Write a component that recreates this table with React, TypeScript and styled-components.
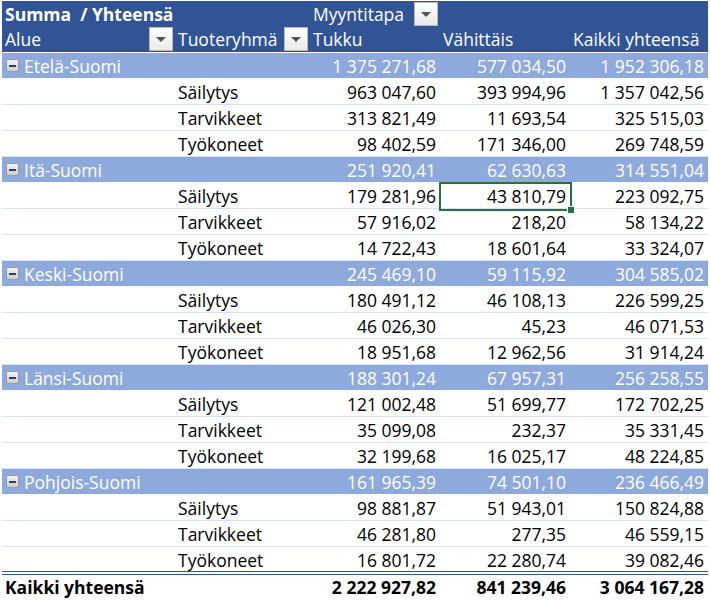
import React from 'react';
import styled, { createGlobalStyle, css } from 'styled-components';

const GlobalStyle = createGlobalStyle`
    html, body {
        margin: 0;
        padding: 0;
        background: #ffffff;
    }
    body {
        font-family: "Open Sans", "Liberation Sans", sans-serif;
        font-size: 17.5px;
        color: #000000;
    }
`;

const Sheet = styled.div`
    padding: 1px 0 0 2px;
    width: 706px;
`;

const Row = styled.div<{ kind: 'head' | 'head2' | 'group' | 'data' | 'last' | 'total' }>`
    display: grid;
    grid-template-columns: 173px 135px 130px 130px 138px;
    height: 26px;
    box-sizing: border-box;
    line-height: 27px;
    ${p => p.kind === 'head' && css`
        height: 25px;
        background: #305496;
        color: #ffffff;
    `}
    ${p => p.kind === 'head2' && css`
        height: 27px;
        background: #305496;
        color: #ffffff;
        border-bottom: 1px solid #ffffff;
    `}
    ${p => p.kind === 'group' && css`
        background: #8ea9db;
        color: #ffffff;
        border-bottom: 1px solid #ffffff;
    `}
    ${p => p.kind === 'data' && css`
        border-bottom: 1px solid #d9e1f2;
    `}
    ${p => p.kind === 'last' && css`
        height: 24px;
    `}
    ${p => p.kind === 'total' && css`
        border-top: 4px double #305496;
        font-weight: 700;
        height: 29px;
        line-height: 25px;
    `}
`;

const Cell = styled.div<{ right?: boolean; selected?: boolean; bold?: boolean }>`
    display: flex;
    align-items: flex-start;
    justify-content: ${p => (p.right ? 'flex-end' : 'flex-start')};
    padding: 0 ${p => (p.right ? '4px' : '2px')} 0 ${p => (p.right ? '0' : '3px')};
    white-space: pre;
    overflow: visible;
    position: relative;
    font-weight: ${p => (p.bold ? 700 : 'inherit')};
    ${p => p.selected && css`
        &::before {
            content: '';
            position: absolute;
            left: -1px;
            top: -1px;
            right: -2px;
            bottom: -1px;
            border: 2px solid #217346;
        }
        &::after {
            content: '';
            position: absolute;
            right: -5px;
            bottom: -4px;
            width: 6px;
            height: 6px;
            background: #217346;
            border: 1px solid #ffffff;
        }
    `}
`;

const Label = styled.span`
    flex: 1;
`;

const Dropdown = styled.span`
    width: 24px;
    height: 24px;
    box-sizing: border-box;
    margin-top: 1px;
    border: 1px solid #b8b8b8;
    background: linear-gradient(#ffffff, #e9e9e9);
    display: flex;
    align-items: center;
    justify-content: center;
    &::after {
        content: '';
        width: 0;
        height: 0;
        border-left: 5px solid transparent;
        border-right: 5px solid transparent;
        border-top: 5px solid #555555;
    }
`;

const Collapse = styled.span`
    width: 13px;
    height: 13px;
    box-sizing: border-box;
    margin: 6px 5px 0 1px;
    border: 1px solid #9a9a9a;
    border-radius: 2px;
    background: linear-gradient(#f2f2f2, #cfcfcf);
    display: flex;
    align-items: center;
    justify-content: center;
    &::after {
        content: '';
        width: 7px;
        height: 2px;
        background: #2b3a67;
    }
`;

type Group = {
    name: string;
    total: string[];
    rows: string[][];
};

const groups: Group[] = [
    {
        name: 'Etelä-Suomi',
        total: ['1 375 271,68', '577 034,50', '1 952 306,18'],
        rows: [
            ['Säilytys', '963 047,60', '393 994,96', '1 357 042,56'],
            ['Tarvikkeet', '313 821,49', '11 693,54', '325 515,03'],
            ['Työkoneet', '98 402,59', '171 346,00', '269 748,59'],
        ],
    },
    {
        name: 'Itä-Suomi',
        total: ['251 920,41', '62 630,63', '314 551,04'],
        rows: [
            ['Säilytys', '179 281,96', '43 810,79', '223 092,75'],
            ['Tarvikkeet', '57 916,02', '218,20', '58 134,22'],
            ['Työkoneet', '14 722,43', '18 601,64', '33 324,07'],
        ],
    },
    {
        name: 'Keski-Suomi',
        total: ['245 469,10', '59 115,92', '304 585,02'],
        rows: [
            ['Säilytys', '180 491,12', '46 108,13', '226 599,25'],
            ['Tarvikkeet', '46 026,30', '45,23', '46 071,53'],
            ['Työkoneet', '18 951,68', '12 962,56', '31 914,24'],
        ],
    },
    {
        name: 'Länsi-Suomi',
        total: ['188 301,24', '67 957,31', '256 258,55'],
        rows: [
            ['Säilytys', '121 002,48', '51 699,77', '172 702,25'],
            ['Tarvikkeet', '35 099,08', '232,37', '35 331,45'],
            ['Työkoneet', '32 199,68', '16 025,17', '48 224,85'],
        ],
    },
    {
        name: 'Pohjois-Suomi',
        total: ['161 965,39', '74 501,10', '236 466,49'],
        rows: [
            ['Säilytys', '98 881,87', '51 943,01', '150 824,88'],
            ['Tarvikkeet', '46 281,80', '277,35', '46 559,15'],
            ['Työkoneet', '16 801,72', '22 280,74', '39 082,46'],
        ],
    },
];

const grandTotal = ['2 222 927,82', '841 239,46', '3 064 167,28'];

function App(): JSX.Element {
    return (
        <Sheet>
            <GlobalStyle />
            <Row kind="head">
                <Cell bold>{'Summa  / Yhteensä'}</Cell>
                <Cell></Cell>
                <Cell>
                    <Label>Myyntitapa</Label>
                    <Dropdown />
                </Cell>
                <Cell></Cell>
                <Cell></Cell>
            </Row>
            <Row kind="head2">
                <Cell>
                    <Label>Alue</Label>
                    <Dropdown />
                </Cell>
                <Cell>
                    <Label>Tuoteryhmä</Label>
                    <Dropdown />
                </Cell>
                <Cell>Tukku</Cell>
                <Cell>Vähittäis</Cell>
                <Cell>Kaikki yhteensä</Cell>
            </Row>
            {groups.map((g, gi) => (
                <React.Fragment key={g.name}>
                    <Row kind="group">
                        <Cell>
                            <Collapse />
                            {g.name}
                        </Cell>
                        <Cell></Cell>
                        {g.total.map((v, i) => (
                            <Cell right key={i}>{v}</Cell>
                        ))}
                    </Row>
                    {g.rows.map((r, ri) => {
                        const isLast = gi === groups.length - 1 && ri === g.rows.length - 1;
                        return (
                            <Row kind={isLast ? 'last' : 'data'} key={r[0]}>
                                <Cell></Cell>
                                <Cell>{r[0]}</Cell>
                                {r.slice(1).map((v, i) => (
                                    <Cell right key={i} selected={gi === 1 && ri === 0 && i === 1}>
                                        {v}
                                    </Cell>
                                ))}
                            </Row>
                        );
                    })}
                </React.Fragment>
            ))}
            <Row kind="total">
                <Cell>Kaikki yhteensä</Cell>
                <Cell></Cell>
                {grandTotal.map((v, i) => (
                    <Cell right key={i}>{v}</Cell>
                ))}
            </Row>
        </Sheet>
    );
}

export default App;
